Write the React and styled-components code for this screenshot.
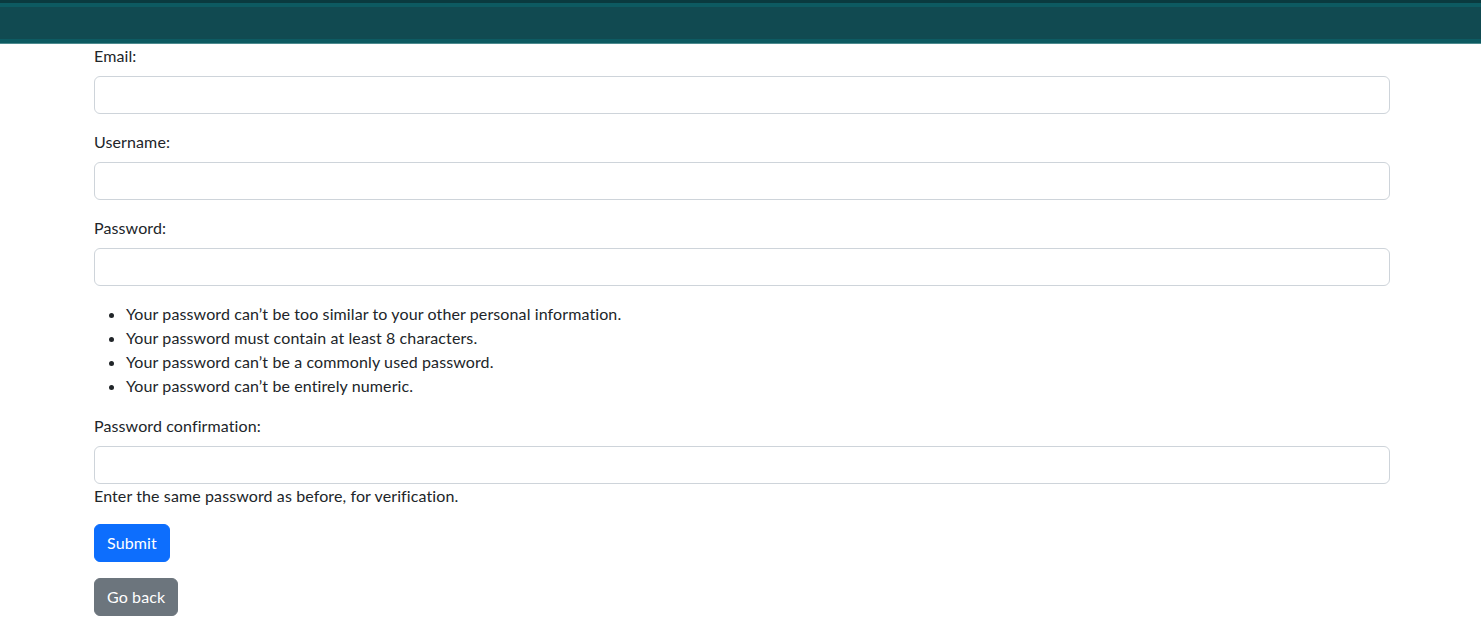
import React from "react";
import styled, { createGlobalStyle } from "styled-components";

const Global = createGlobalStyle`
  html, body { margin: 0; padding: 0; background: #fff; }
  body {
    font-family: Lato, "Noto Sans", "Liberation Sans", sans-serif;
    font-size: 16px;
    line-height: 1.5;
    letter-spacing: 0.11px;
    color: #212529;
  }
  * { box-sizing: border-box; }
`;

const Header = styled.header`
  height: 44px;
  background: #114a51;
  border-top: 3px solid #0a3a3f;
  box-shadow: inset 0 4px 0 #0d5a61, inset 0 -4px 0 #0d5a61;
  border-bottom: 1px solid #4d8a8e;
`;

const Main = styled.main`
  padding: 0 91px 16px 94px;
`;

const Field = styled.div`
  margin-bottom: ${(p) => (p.$flush ? 0 : 16)}px;
`;

const Label = styled.label`
  display: block;
  margin-bottom: 8px;
`;

const Input = styled.input`
  display: block;
  width: 100%;
  height: 38px;
  padding: 6px 12px;
  font: inherit;
  color: #212529;
  background: #fff;
  border: 1px solid #ced4da;
  border-radius: 6px;
  outline: none;
`;

const HelpList = styled.ul`
  margin: 16px 0 16px;
  padding-left: 32px;
`;

const HelpText = styled.div`
  margin: 0;
`;

const Button = styled.button`
  display: inline-block;
  font: inherit;
  letter-spacing: inherit;
  line-height: 1.5;
  padding: 6px 12px;
  border: 1px solid ${(p) => p.$bg};
  border-radius: 6px;
  color: #fff;
  background: ${(p) => p.$bg};
  cursor: pointer;
`;

const ButtonRow = styled.div`
  margin-top: ${(p) => p.$mt}px;
`;

export default function App() {
  return (
    <>
      <Global />
      <Header />
      <Main>
        <form onSubmit={(e) => e.preventDefault()}>
          <Field>
            <Label htmlFor="email">Email:</Label>
            <Input id="email" type="email" />
          </Field>
          <Field>
            <Label htmlFor="username">Username:</Label>
            <Input id="username" type="text" />
          </Field>
          <Field $flush>
            <Label htmlFor="password1">Password:</Label>
            <Input id="password1" type="password" />
          </Field>
          <HelpList>
            <li>Your password can’t be too similar to your other personal information.</li>
            <li>Your password must contain at least 8 characters.</li>
            <li>Your password can’t be a commonly used password.</li>
            <li>Your password can’t be entirely numeric.</li>
          </HelpList>
          <Field>
            <Label htmlFor="password2">Password confirmation:</Label>
            <Input id="password2" type="password" />
            <HelpText>Enter the same password as before, for verification.</HelpText>
          </Field>
          <ButtonRow $mt={0}>
            <Button type="submit" $bg="#0d6efd">Submit</Button>
          </ButtonRow>
        </form>
        <ButtonRow $mt={16}>
          <Button type="button" $bg="#6c757d">Go back</Button>
        </ButtonRow>
      </Main>
    </>
  );
}
